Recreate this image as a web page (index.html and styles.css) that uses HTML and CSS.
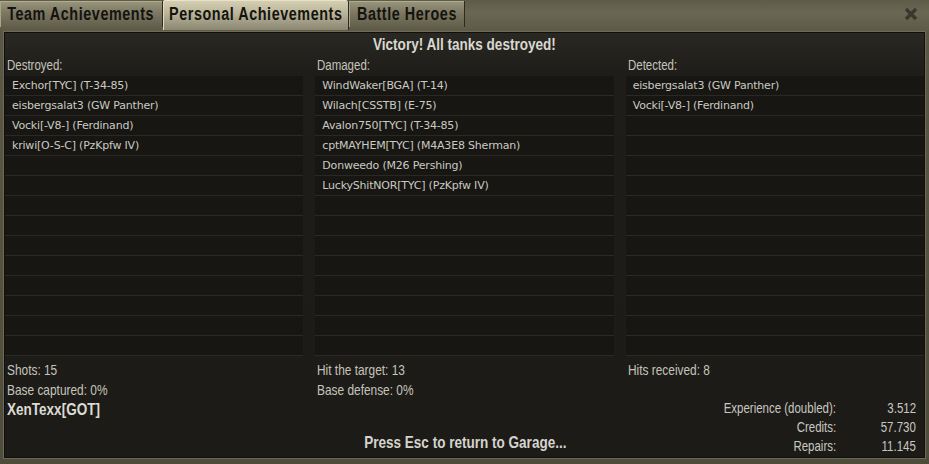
FILE: index.html
```html
<!DOCTYPE html>
<html>
<head>
<meta charset="utf-8">
<link rel="stylesheet" href="styles.css">
</head>
<body>
<div class="window">
  <div class="tabbar">
    <div class="tabs">
      <div class="tab tab-team"><span class="n c">Team Achievements</span></div>
      <div class="tab tab-personal active"><span class="n c">Personal Achievements</span></div>
      <div class="tab tab-heroes"><span class="n c">Battle Heroes</span></div>
    </div>
    <div class="close">
      <svg width="14" height="14" viewBox="0 0 14 14"><path d="M2 2 L12 12 M12 2 L2 12" stroke="#3a382e" stroke-width="3.4" stroke-linecap="butt"/></svg>
    </div>
  </div>
  <div class="panel">
    <div class="title"><span class="n c">Victory! All tanks destroyed!</span></div>
    <div class="columns">
      <div class="col">
        <div class="label"><span class="n">Destroyed:</span></div>
        <ul class="list">
          <li>Exchor[TYC] (T-34-85)</li>
          <li>eisbergsalat3 (GW Panther)</li>
          <li>Vocki[-V8-] (Ferdinand)</li>
          <li>kriwi[O-S-C] (PzKpfw IV)</li>
          <li></li><li></li><li></li><li></li><li></li><li></li><li></li><li></li><li></li><li></li>
        </ul>
      </div>
      <div class="col">
        <div class="label"><span class="n">Damaged:</span></div>
        <ul class="list">
          <li>WindWaker[BGA] (T-14)</li>
          <li>Wilach[CSSTB] (E-75)</li>
          <li>Avalon750[TYC] (T-34-85)</li>
          <li>cptMAYHEM[TYC] (M4A3E8 Sherman)</li>
          <li>Donweedo (M26 Pershing)</li>
          <li>LuckyShitNOR[TYC] (PzKpfw IV)</li>
          <li></li><li></li><li></li><li></li><li></li><li></li><li></li><li></li>
        </ul>
      </div>
      <div class="col">
        <div class="label"><span class="n">Detected:</span></div>
        <ul class="list">
          <li>eisbergsalat3 (GW Panther)</li>
          <li>Vocki[-V8-] (Ferdinand)</li>
          <li></li><li></li><li></li><li></li><li></li><li></li><li></li><li></li><li></li><li></li><li></li><li></li>
        </ul>
      </div>
    </div>
    <div class="footer">
      <div class="fcol">
        <div class="stat"><span class="n">Shots: 15</span></div>
        <div class="stat"><span class="n">Base captured: 0%</span></div>
        <div class="player"><span class="n">XenTexx[GOT]</span></div>
      </div>
      <div class="fcol">
        <div class="stat"><span class="n">Hit the target: 13</span></div>
        <div class="stat"><span class="n">Base defense: 0%</span></div>
        <div class="esc"><span class="n c">Press Esc to return to Garage...</span></div>
      </div>
      <div class="fcol">
        <div class="stat"><span class="n">Hits received: 8</span></div>
        <div class="rewards">
          <span class="rl"><span class="n r">Experience (doubled):</span></span><span class="rv"><span class="n r">3.512</span></span>
          <span class="rl"><span class="n r">Credits:</span></span><span class="rv"><span class="n r">57.730</span></span>
          <span class="rl"><span class="n r">Repairs:</span></span><span class="rv"><span class="n r">11.145</span></span>
        </div>
      </div>
    </div>
  </div>
</div>
</body>
</html>
```

FILE: styles.css
```css
* { box-sizing: border-box; }

body {
  margin: 0;
  width: 929px;
  height: 464px;
  overflow: hidden;
  background: linear-gradient(#6c6954, #5a5744 30px, #4f4c3b);
  font-family: "Liberation Sans", Arial, sans-serif;
  color: #c8c8c0;
}

/* Arial Narrow emulation: Liberation Sans squeezed to 82% width */
.n {
  display: inline-block;
  white-space: nowrap;
  transform: scaleX(0.82);
  transform-origin: left center;
}
.n.c { transform-origin: center center; }
.n.r { transform-origin: right center; }

.window {
  display: flex;
  flex-direction: column;
  height: 464px;
}

.tabbar {
  height: 31px;
  display: flex;
  justify-content: space-between;
  align-items: flex-start;
  background: linear-gradient(#5e5b49, #6a6754 40%, #5d5a48);
}

.tabs {
  display: flex;
  align-items: flex-start;
}

.tab {
  height: 26px;
  margin-top: 1px;
  display: flex;
  align-items: center;
  justify-content: center;
  white-space: nowrap;
  font-weight: bold;
  font-size: 17.5px;
  letter-spacing: 0.7px;
  color: #14130f;
  background: linear-gradient(#9a967d, #7c7862 45%, #615e4b);
  border-right: 1px solid #2c2a22;
  box-shadow: inset 1px 0 #a9a58b, inset 0 1px #b0ac92;
}

.tab-team { width: 163px; }
.tab-personal { width: 186px; }
.tab-heroes { width: 116px; }

.tab.active {
  height: 30px;
  margin-top: 0;
  padding-bottom: 2px;
  background: linear-gradient(#d6d1b4, #bdb89c 40%, #9a9680 80%, #8a866f);
  border-radius: 3px 3px 0 0;
  box-shadow: inset 1px 0 #e2ddc0, inset 0 1px #e8e3c6;
}

.close {
  width: 24px;
  height: 28px;
  display: flex;
  align-items: center;
  justify-content: center;
  margin-right: 6px;
}

.panel {
  flex: 1;
  margin: 1px 4px 6px 4px;
  border: 1px solid #100f0c;
  background: linear-gradient(#2a2823, #1f1d19 40px, #1d1b17);
  display: flex;
  flex-direction: column;
  box-shadow: 0 0 0 1px #6e6b57;
}

.title {
  margin-top: 1px;
  height: 20px;
  line-height: 20px;
  text-align: center;
  font-weight: bold;
  font-size: 16.5px;
  color: #d8d8d0;
}

.columns {
  display: grid;
  grid-template-columns: 1fr 1fr 1fr;
  column-gap: 12px;
}

.label {
  margin-top: 2px;
  height: 18px;
  line-height: 18px;
  margin-bottom: 2px;
  padding-left: 2px;
  font-size: 14px;
  color: #c4c4bc;
}

.list {
  list-style: none;
  margin: 0;
  padding: 0;
}

.list li {
  height: 20px;
  line-height: 19px;
  border-bottom: 1px solid #2b2924;
  background: #171613;
  padding-left: 7px;
  font-family: "DejaVu Sans", sans-serif;
  font-size: 11px;
  letter-spacing: -0.2px;
  color: #cacac2;
  white-space: nowrap;
}

.footer {
  flex: 1;
  display: grid;
  grid-template-columns: 1fr 1fr 1fr;
  column-gap: 12px;
  padding-top: 4px;
}

.fcol {
  display: flex;
  flex-direction: column;
  padding-left: 2px;
}

.stat {
  height: 20px;
  line-height: 20px;
  font-size: 14.5px;
  color: #c4c4bc;
}

.player {
  height: 18px;
  line-height: 18px;
  font-weight: bold;
  font-size: 16.5px;
  color: #dcdcd4;
}

.esc {
  margin-top: auto;
  margin-bottom: 5px;
  height: 20px;
  line-height: 20px;
  text-align: center;
  font-weight: bold;
  font-size: 16.5px;
  color: #d4d4cc;
}

.rewards {
  margin-top: 19px;
  display: grid;
  grid-template-columns: auto 80px;
  justify-content: end;
  padding-right: 8px;
  font-size: 14px;
  color: #c8c8c0;
}

.rl, .rv {
  height: 19px;
  line-height: 19px;
  text-align: right;
}
```
